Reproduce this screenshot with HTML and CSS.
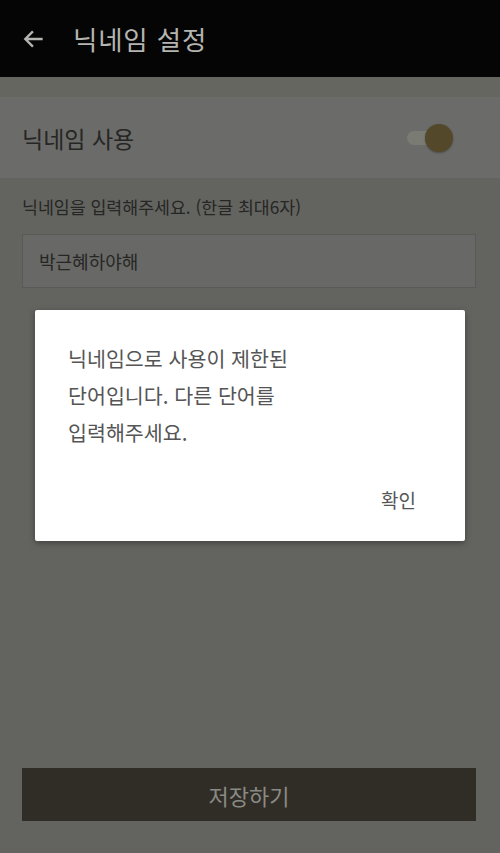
FILE: index.html
```html
<!DOCTYPE html>
<html lang="ko">
<head>
  <meta charset="UTF-8">
  <meta name="viewport" content="width=device-width, initial-scale=1.0">
  <title>닉네임 설정</title>
  <link rel="stylesheet" href="styles.css">
</head>
<body>
  <div class="screen">
    <!-- Header -->
    <header class="topbar">
      <svg class="back" width="26" height="26" viewBox="0 0 24 24">
        <path d="M20 12H5M11 5l-7 7 7 7" fill="none" stroke="#b4b4b0" stroke-width="2.2"/>
      </svg>
      <h1>닉네임 설정</h1>
    </header>

    <div class="gap-band"></div>

    <!-- Nickname toggle -->
    <div class="toggle-row">
      <span>닉네임 사용</span>
      <div class="switch">
        <div class="track"></div>
        <div class="knob"></div>
      </div>
    </div>

    <!-- Input -->
    <div class="form">
      <p class="hint">닉네임을 입력해주세요. (한글 최대6자)</p>
      <div class="field">박근혜하야해</div>
    </div>

    <div class="spacer"></div>

    <div class="bottom">
      <button class="save-btn">저장하기</button>
    </div>

    <!-- Dialog -->
    <div class="dialog">
      <p class="dialog-msg">닉네임으로 사용이 제한된<br>단어입니다. 다른 단어를<br>입력해주세요.</p>
      <div class="dialog-actions">
        <span class="ok">확인</span>
      </div>
    </div>
  </div>
</body>
</html>
```
FILE: styles.css
```css
/* General */
body {
  margin: 0;
  font-family: "Noto Sans CJK KR", "Noto Sans", sans-serif;
  background-color: #636460;
}

.screen {
  position: relative;
  width: 500px;
  height: 853px;
  display: flex;
  flex-direction: column;
  background-color: #636460;
}

/* Header */
.topbar {
  height: 77px;
  background-color: #050505;
  display: flex;
  align-items: center;
  padding-left: 21px;
  box-sizing: border-box;
}

.topbar h1 {
  margin: 0 0 0 26px;
  font-size: 26.5px;
  font-weight: 400;
  color: #b4b4b0;
  letter-spacing: 0.8px;
}

.gap-band {
  height: 20px;
  background-color: #65665f;
}

/* Toggle row */
.toggle-row {
  height: 81px;
  background-color: #6b6b69;
  display: flex;
  align-items: center;
  justify-content: space-between;
  padding: 0 47px 0 22px;
}

.toggle-row span {
  font-size: 23px;
  color: #262624;
}

.switch {
  position: relative;
  width: 48px;
  height: 30px;
}

.track {
  position: absolute;
  left: 2px;
  top: 8px;
  width: 40px;
  height: 14px;
  border-radius: 7px;
  background-color: #7a7b73;
}

.knob {
  position: absolute;
  right: 0;
  top: 1px;
  width: 28px;
  height: 28px;
  border-radius: 50%;
  background-color: #54482a;
  box-shadow: 0 1px 2px rgba(0, 0, 0, 0.3);
}

/* Form */
.form {
  padding: 0 24px 0 22px;
}

.hint {
  margin: 16px 0 15px;
  font-size: 17.3px;
  color: #262624;
}

.field {
  height: 54px;
  border: 1px solid #595a56;
  background-color: #686966;
  box-sizing: border-box;
  padding-left: 16px;
  display: flex;
  align-items: center;
  font-size: 18px;
  color: #262624;
}

.spacer {
  flex: 1;
}

/* Save button */
.bottom {
  padding: 0 24px 32px 22px;
}

.save-btn {
  width: 100%;
  height: 53px;
  border: none;
  background-color: #302d27;
  color: #8a8a85;
  font-family: inherit;
  font-size: 22px;
}

/* Dialog */
.dialog {
  position: absolute;
  left: 35px;
  top: 310px;
  width: 430px;
  height: 231px;
  background-color: #fff;
  border-radius: 2px;
  box-shadow: 0 2px 6px rgba(0, 0, 0, 0.35);
  box-sizing: border-box;
  padding: 30px 33px 0;
  display: flex;
  flex-direction: column;
}

.dialog-msg {
  margin: 0;
  font-size: 20.6px;
  line-height: 37px;
  color: #555;
}

.dialog-actions {
  margin-top: auto;
  display: flex;
  justify-content: flex-end;
  padding-bottom: 28px;
}

.ok {
  font-size: 19px;
  color: #555;
  margin-right: 16px;
}
```
